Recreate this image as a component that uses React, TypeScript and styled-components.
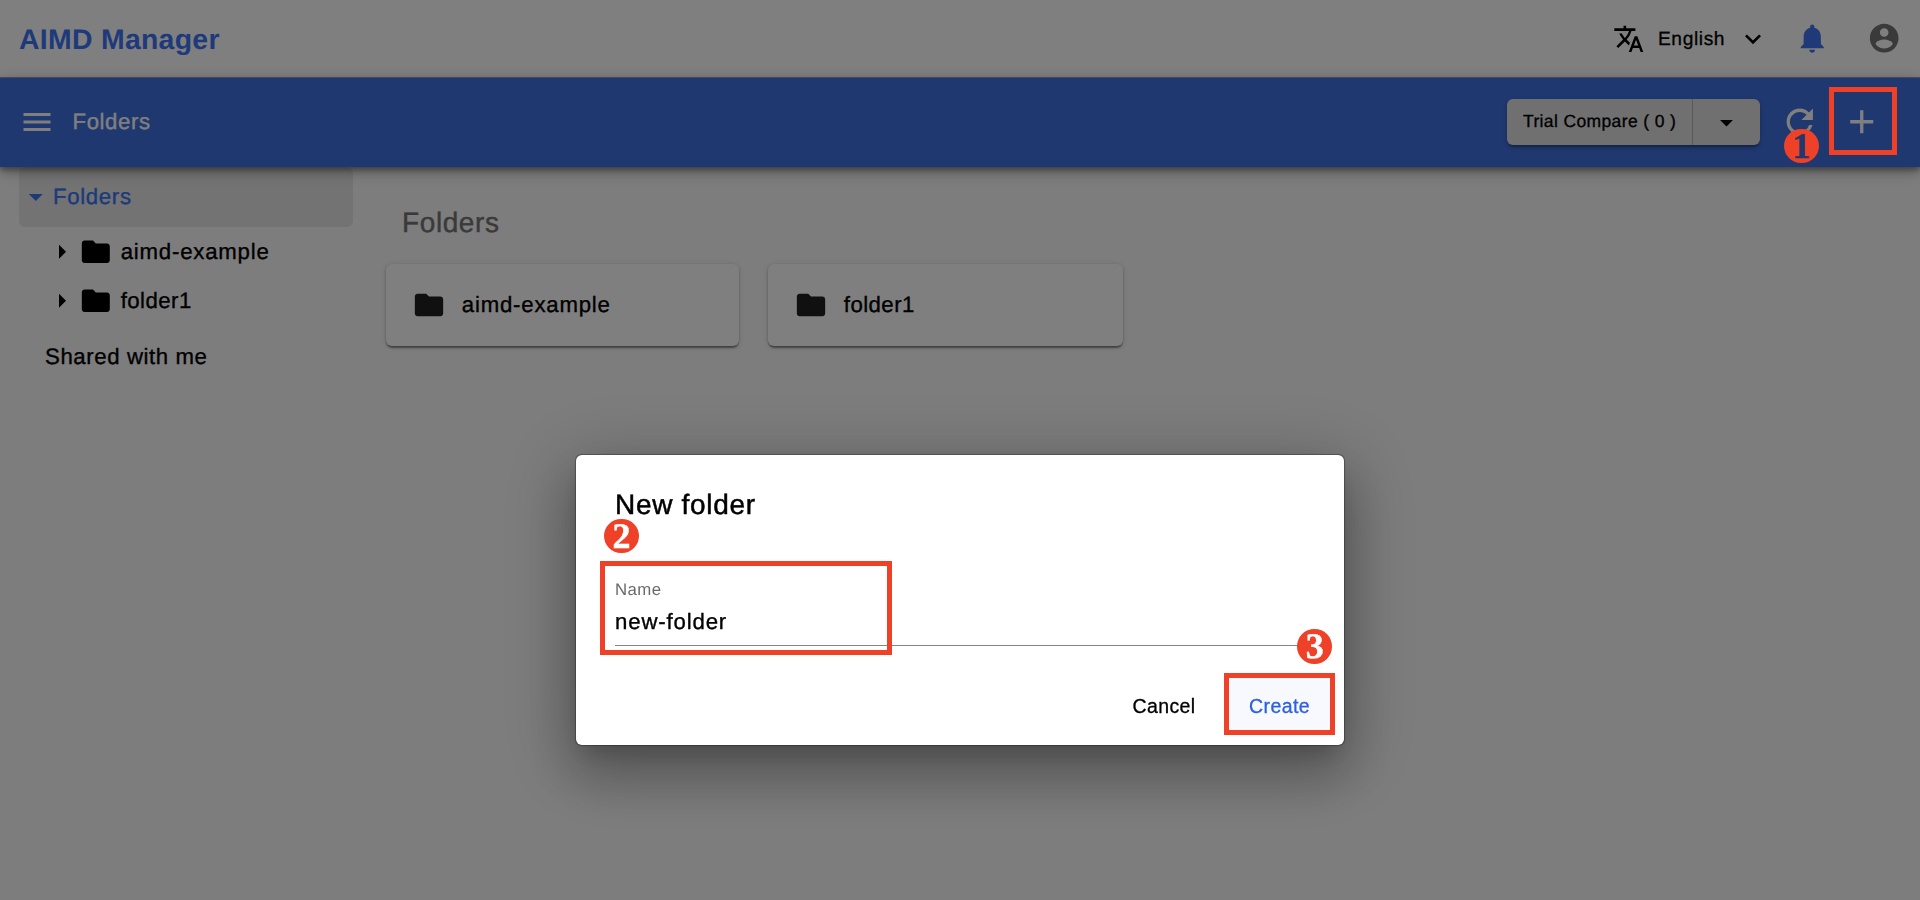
import React from "react";
import styled, { createGlobalStyle, css } from "styled-components";
import {
  MdTranslate, MdExpandMore, MdNotifications, MdMenu, MdRefresh, MdAdd,
  MdFolder, MdArrowDropDown, MdArrowRight,
} from "react-icons/md";

const Global = createGlobalStyle`
  * { box-sizing: border-box; }
  body {
    margin: 0;
    background: #fafafa;
    color: #000;
    font-family: "Liberation Sans", Arial, sans-serif;
    text-rendering: geometricPrecision;
    overflow: hidden;
  }
  svg { display: block; flex: none; }
`;

const body = css`
  font-size: 22.2px;
  letter-spacing: 0.8px;
  line-height: 30px;
  -webkit-text-stroke: 0.35px currentColor;
`;

const Page = styled.div`
  height: 900px;
  display: flex;
  flex-direction: column;
`;
const Header = styled.header`
  height: 78px;
  flex: none;
  display: flex;
  align-items: center;
  justify-content: space-between;
  padding: 0 19px 1px 19px;
  background: #fff;
`;
const Brand = styled.div`
  padding-top: 2px;
  font-size: 28.4px;
  letter-spacing: 0.3px;
  font-weight: 700;
  line-height: 36px;
  color: #3e74f4;
`;
const HeaderTools = styled.div`
  display: flex;
  align-items: center;
`;
const Language = styled.div`
  display: flex;
  align-items: center;
  font-size: 19.2px;
  letter-spacing: 0.6px;
  line-height: 26px;
  -webkit-text-stroke: 0.3px currentColor;
  span { margin: 3px 12px 0 13px; }
`;
const Bell = styled.div`
  margin: 0 0 0 25.5px;
  color: #3e74ee;
`;
const Account = styled.div`
  margin-left: 37.5px;
  color: #747474;
`;

const Toolbar = styled.nav`
  position: relative;
  z-index: 1;
  height: 89px;
  flex: none;
  display: flex;
  align-items: center;
  padding: 0 38.5px 1px 18.5px;
  background: #3e70e0;
  color: #fff;
  box-shadow: 0 -1px 0 #8a94b0, 0 3px 5px rgba(0, 0, 0, 0.3), 0 6px 12px rgba(0, 0, 0, 0.2), 0 1px 14px rgba(0, 0, 0, 0.14);
`;
const ToolbarTitle = styled.div`
  ${body}
  letter-spacing: 0.6px;
  margin-left: 18px;
  flex: 1;
`;
const SplitButton = styled.div`
  display: flex;
  height: 46px;
  margin-right: 19.5px;
  border-radius: 6px;
  background: #e0e0e0;
  color: #000;
  box-shadow: 0 3px 2px -1px rgba(0, 0, 0, 0.25), 0 2px 5px rgba(0, 0, 0, 0.2);
`;
const SplitMain = styled.div`
  width: 186px;
  display: flex;
  align-items: center;
  padding: 0 0 1px 16px;
  border-right: 1px solid #b4b4b4;
  font-size: 17.5px;
  letter-spacing: 0.37px;
  -webkit-text-stroke: 0.3px currentColor;
  white-space: nowrap;
`;
const SplitCaret = styled.div`
  width: 67px;
  display: flex;
  align-items: center;
  justify-content: center;
`;
const ToolIcon = styled.div<{ $gap?: number }>`
  margin-left: ${(p) => p.$gap ?? 0}px;
`;

const Main = styled.div`
  display: flex;
  flex: 1;
`;
const Sidebar = styled.aside`
  width: 353px;
  padding-left: 19px;
`;
const Root = styled.div`
  ${body}
  letter-spacing: 0.65px;
  height: 60px;
  display: flex;
  align-items: center;
  border-radius: 6px;
  background: #e6e6e6;
  color: #3974f4;
  span { margin-left: 0.5px; }
`;
const TreeRow = styled.div`
  ${body}
  height: 49.5px;
  display: flex;
  align-items: center;
  padding-left: 26px;
  span { margin-left: 8.5px; }
`;
const Shared = styled.div`
  ${body}
  letter-spacing: 0.6px;
  margin: 15px 0 0 26px;
  padding-top: 1px;
`;
const Content = styled.main`
  padding: 38px 0 0 33px;
`;
const Heading = styled.h2`
  margin: 0 0 23px 16px;
  font-size: 28px;
  font-weight: 400;
  letter-spacing: 0.6px;
  line-height: 36px;
  color: #747474;
  -webkit-text-stroke: 0.4px currentColor;
`;
const Cards = styled.div`
  display: grid;
  grid-template-columns: 353px 355px;
  gap: 29px;
`;
const Card = styled.div`
  ${body}
  height: 82px;
  display: flex;
  align-items: center;
  padding-left: 25.5px;
  border-radius: 6px;
  background: #fff;
  box-shadow: 0 3px 2px -1px rgba(0, 0, 0, 0.34), 0 1px 2px rgba(0, 0, 0, 0.2), 0 1px 5px rgba(0, 0, 0, 0.16);
  svg { color: #202020; }
  span { margin-left: 16.3px; }
`;
const Name = styled.span<{ $tight: boolean }>`
  letter-spacing: ${(p) => (p.$tight ? 0.45 : 0.8)}px;
`;

const Backdrop = styled.div`
  position: fixed;
  inset: 0;
  z-index: 10;
  display: flex;
  justify-content: center;
  align-items: flex-start;
  padding-top: 455px;
  background: rgba(0, 0, 0, 0.5);
`;
const Dialog = styled.section`
  width: 768px;
  height: 290px;
  padding: 32px 12px 0 39px;
  border-radius: 6px;
  background: #fff;
  box-shadow: 0 13px 24px -8px rgba(0, 0, 0, 0.2), 0 30px 54px 5px rgba(0, 0, 0, 0.2), 0 12px 70px 14px rgba(0, 0, 0, 0.18), 0 0 1px 0.5px rgba(0, 0, 0, 0.3);
`;
const DialogTitle = styled.h1`
  margin: 0;
  font-size: 28px;
  font-weight: 400;
  letter-spacing: 0.7px;
  line-height: 36px;
  -webkit-text-stroke: 0.5px currentColor;
`;
const Field = styled.div`
  margin: 57px 27px 0 0;
  border-bottom: 1px solid #858585;
  height: 66px;
`;
const Label = styled.div`
  font-size: 16.8px;
  letter-spacing: 0.4px;
  line-height: 20px;
  color: #696969;
`;
const Value = styled.div`
  ${body}
  letter-spacing: 0.85px;
  margin-top: 7px;
`;
const Actions = styled.div`
  display: flex;
  justify-content: flex-end;
  margin-top: 31.5px;
`;
const Action = styled.button<{ $primary?: boolean }>`
  height: 56px;
  width: ${(p) => (p.$primary ? 105 : 100)}px;
  margin-left: ${(p) => (p.$primary ? 13 : 0)}px;
  padding: 2px 0 0;
  border: 0;
  border-radius: 4px;
  background: ${(p) => (p.$primary ? "#f8f9ff" : "transparent")};
  color: ${(p) => (p.$primary ? "#2c60e0" : "#000")};
  font-family: inherit;
  font-size: 19.5px;
  letter-spacing: 0.4px;
  -webkit-text-stroke: 0.3px currentColor;
`;

const Frame = styled.div<{ $x: number; $y: number; $w: number; $h: number }>`
  position: fixed;
  z-index: 20;
  left: ${(p) => p.$x}px;
  top: ${(p) => p.$y}px;
  width: ${(p) => p.$w}px;
  height: ${(p) => p.$h}px;
  border: 5px solid #ee4127;
`;
const Step = styled.div<{ $x: number; $y: number; $ink?: string }>`
  position: fixed;
  z-index: 21;
  left: ${(p) => p.$x}px;
  top: ${(p) => p.$y}px;
  width: 34.6px;
  height: 34.6px;
  border-radius: 50%;
  background: #ee4127;
  color: ${(p) => p.$ink ?? "#fff"};
  font: 700 36px/34px "Liberation Serif", serif;
  -webkit-text-stroke: 0.5px currentColor;
  text-align: center;
`;

const AccountIcon = () => (
  <svg width="34.4" height="34.4" viewBox="0 0 24 24" fill="currentColor">
    <path d="M12 2C6.48 2 2 6.48 2 12s4.48 10 10 10 10-4.48 10-10S17.52 2 12 2zm0 3c1.66 0 3 1.34 3 3s-1.34 3-3 3-3-1.34-3-3 1.34-3 3-3zm0 14.2c-2.5 0-4.71-1.28-6-3.22.03-1.99 4-3.08 6-3.08 1.99 0 5.97 1.09 6 3.08-1.29 1.94-3.5 3.22-6 3.22z" />
  </svg>
);

const folders = ["aimd-example", "folder1"];

export default function App() {
  return (
    <>
      <Global />
      <Page>
        <Header>
          <Brand>AIMD Manager</Brand>
          <HeaderTools>
            <Language>
              <MdTranslate size={31.6} />
              <span>English</span>
              <MdExpandMore size={32} />
            </Language>
            <Bell><MdNotifications size={34.5} /></Bell>
            <Account><AccountIcon /></Account>
          </HeaderTools>
        </Header>
        <Toolbar>
          <MdMenu size={36} />
          <ToolbarTitle>Folders</ToolbarTitle>
          <SplitButton>
            <SplitMain>Trial Compare ( 0 )</SplitMain>
            <SplitCaret><MdArrowDropDown size={31} /></SplitCaret>
          </SplitButton>
          <ToolIcon><MdRefresh size={39.5} /></ToolIcon>
          <ToolIcon $gap={23}><MdAdd size={39.5} /></ToolIcon>
        </Toolbar>
        <Main>
          <Sidebar>
            <Root>
              <MdArrowDropDown size={33.6} />
              <span>Folders</span>
            </Root>
            {folders.map((name) => (
              <TreeRow key={name}>
                <MdArrowRight size={33.6} />
                <MdFolder size={33.6} />
                <Name $tight={name.length < 8}>{name}</Name>
              </TreeRow>
            ))}
            <Shared>Shared with me</Shared>
          </Sidebar>
          <Content>
            <Heading>Folders</Heading>
            <Cards>
              {folders.map((name) => (
                <Card key={name}>
                  <MdFolder size={34} />
                  <Name $tight={name.length < 8}>{name}</Name>
                </Card>
              ))}
            </Cards>
          </Content>
        </Main>
      </Page>
      <Backdrop>
        <Dialog>
          <DialogTitle>New folder</DialogTitle>
          <Field>
            <Label>Name</Label>
            <Value>new-folder</Value>
          </Field>
          <Actions>
            <Action>Cancel</Action>
            <Action $primary>Create</Action>
          </Actions>
        </Dialog>
      </Backdrop>
      <Frame $x={1829} $y={87} $w={68} $h={68} />
      <Frame $x={600} $y={561} $w={292} $h={94} />
      <Frame $x={1224} $y={673} $w={111} $h={62} />
      <Step $x={1784.4} $y={128.7} $ink="#1f3870">1</Step>
      <Step $x={604.2} $y={518.5}>2</Step>
      <Step $x={1297.4} $y={629.4}>3</Step>
    </>
  );
}
